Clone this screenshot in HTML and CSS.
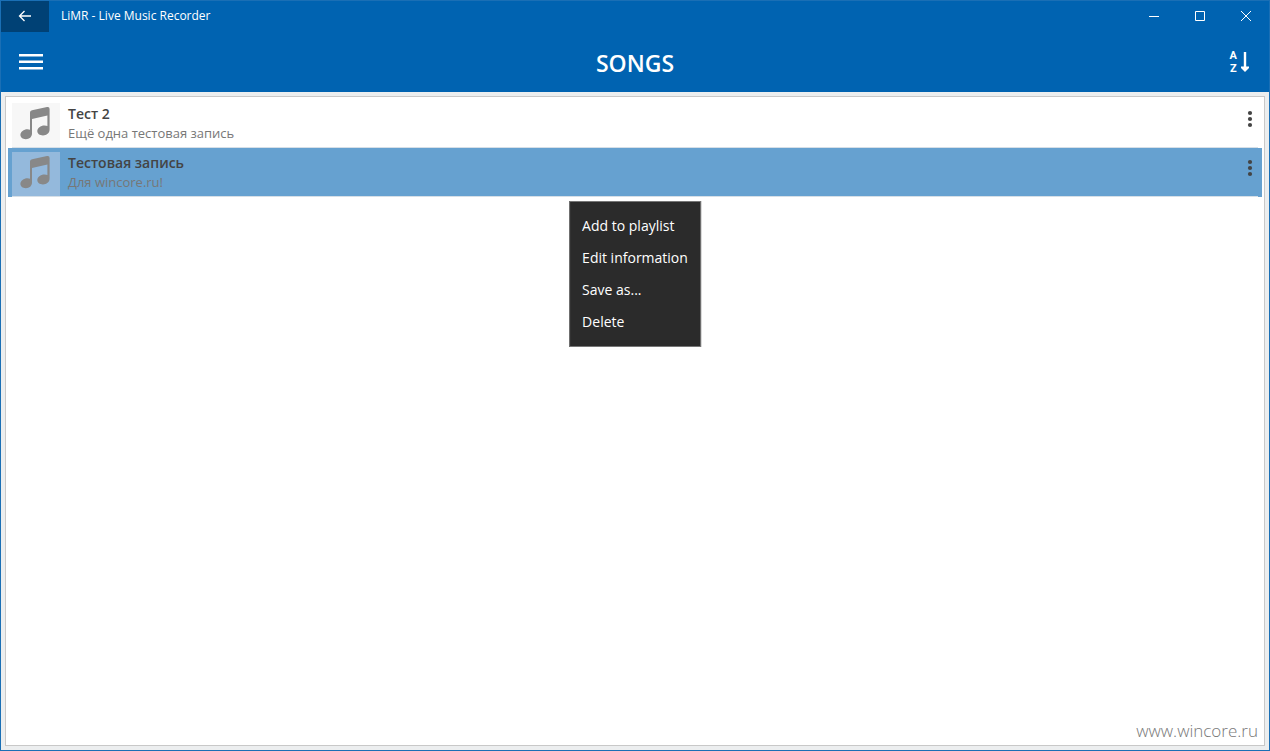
FILE: index.html
```html
<!DOCTYPE html>
<html lang="en">
<head>
    <meta charset="UTF-8">
    <meta name="viewport" content="width=device-width, initial-scale=1.0">
    <title>LiMR - Live Music Recorder</title>
    <link rel="stylesheet" href="styles.css">
</head>
<body>
    <!-- Shared icons -->
    <svg class="defs" width="0" height="0" aria-hidden="true">
        <symbol id="note" viewBox="0 0 48 44">
            <path d="M18 9.600 Q18 7.600 20 7.200 L35 4 Q37.600 3.400 37.600 6 V26.500 C37.600 30 34.500 32.400 31 32.400 C27.600 32.400 25.300 30.500 25.300 28 C25.300 25 28.600 22.400 32.400 22.400 C33.800 22.400 34.800 22.700 35.400 23 V12.600 L20 16 V30.500 C20 34 17.400 36.200 13.800 36.200 C10.600 36.200 8.400 34.300 8.400 31.800 C8.400 28.800 11.800 26.200 15.400 26.200 C16.600 26.200 17.400 26.400 18 26.700 Z"/>
        </symbol>
        <symbol id="dots" viewBox="0 0 6 18">
            <circle cx="3" cy="3" r="2.1"/>
            <circle cx="3" cy="9" r="2.1"/>
            <circle cx="3" cy="15" r="2.1"/>
        </symbol>
    </svg>

    <div class="window">
        <!-- Header -->
        <header>
            <div class="titlebar">
                <button class="back" aria-label="Back">
                    <svg width="14" height="12" viewBox="0 0 14 12"><path d="M13 6H1.500M6.500 1L1.500 6L6.500 11"/></svg>
                </button>
                <span class="caption">LiMR - Live Music Recorder</span>
                <button class="control" aria-label="Minimize">
                    <svg width="12" height="12" viewBox="0 0 12 12"><path d="M1 6.500H11"/></svg>
                </button>
                <button class="control" aria-label="Maximize">
                    <svg width="12" height="12" viewBox="0 0 12 12"><path d="M1.500 1.500H10.500V10.500H1.500Z"/></svg>
                </button>
                <button class="control" aria-label="Close">
                    <svg width="12" height="12" viewBox="0 0 12 12"><path d="M1 1L11 11M11 1L1 11"/></svg>
                </button>
            </div>
            <div class="toolbar">
                <button class="tool" aria-label="Menu">
                    <svg width="24" height="16" viewBox="0 0 24 16"><path d="M0 0H24V2.500H0ZM0 6.600H24V9.100H0ZM0 13H24V15.500H0Z"/></svg>
                </button>
                <h1>SONGS</h1>
                <button class="tool sort" aria-label="Sort">
                    <span class="letters"><span>A</span><span>Z</span></span>
                    <svg width="8" height="20" viewBox="0 0 8 20"><path d="M2.800 0H5.200V14.500H8V16L4 20L0 16V14.500H2.800Z"/></svg>
                </button>
            </div>
        </header>

        <!-- Song list -->
        <main>
            <div class="panel">
                <ul class="songs">
                    <li class="song">
                        <div class="row">
                            <svg class="thumb" width="48" height="44"><use href="#note"/></svg>
                            <div class="info">
                                <div class="name">Тест 2</div>
                                <div class="desc">Ещё одна тестовая запись</div>
                            </div>
                            <button class="more" aria-label="More"><svg width="6" height="18"><use href="#dots"/></svg></button>
                        </div>
                    </li>
                    <li class="song selected">
                        <div class="row">
                            <svg class="thumb" width="48" height="44"><use href="#note"/></svg>
                            <div class="info">
                                <div class="name">Тестовая запись</div>
                                <div class="desc">Для wincore.ru!</div>
                            </div>
                            <button class="more" aria-label="More"><svg width="6" height="18"><use href="#dots"/></svg></button>
                        </div>
                        <!-- Context menu -->
                        <div class="menu">
                            <button>Add to playlist</button>
                            <button>Edit information</button>
                            <button>Save as...</button>
                            <button>Delete</button>
                        </div>
                    </li>
                </ul>
                <div class="site">www.wincore.ru</div>
            </div>
        </main>
    </div>
</body>
</html>
```
FILE: styles.css
```css
* {
    box-sizing: border-box;
}
body {
    margin: 0;
    font-family: "Segoe UI", "Open Sans", "Noto Sans", sans-serif;
    color: #444;
}
button {
    margin: 0;
    padding: 0;
    border: none;
    background: none;
    font: inherit;
    color: inherit;
}
.defs {
    position: absolute;
}
.window {
    display: flex;
    flex-direction: column;
    min-height: 100vh;
    border: 1px solid #1a6fb5;
    background-color: #eceeef;
}

/* Header */
header {
    background-color: #0063b1;
    color: #fff;
}
.titlebar {
    display: flex;
    height: 31px;
}
.titlebar svg {
    fill: none;
    stroke: #fff;
    stroke-width: 1;
}
.back,
.control {
    display: flex;
    align-items: center;
    justify-content: center;
    padding-bottom: 1px;
}
.back {
    width: 48px;
    background-color: #004175;
}
.back svg {
    stroke-width: 1.3;
}
.control {
    width: 46px;
}
.caption {
    flex-grow: 1;
    padding-left: 12px;
    font-size: 12px;
    line-height: 30px;
}
.toolbar {
    display: flex;
    align-items: center;
    justify-content: space-between;
    height: 60px;
    padding: 0 18px;
}
.toolbar h1 {
    margin: 0;
    padding-top: 2px;
    font-size: 23px;
    font-weight: 600;
    line-height: 32px;
}
.tool {
    display: flex;
    align-items: center;
    gap: 4px;
    width: 24px;
}
.tool svg {
    flex-shrink: 0;
    fill: #fff;
}
.sort {
    justify-content: flex-end;
    padding-right: 2px;
}
.letters {
    display: flex;
    flex-direction: column;
    font-family: Roboto, sans-serif;
    font-size: 11px;
    font-weight: 700;
    line-height: 13px;
}

/* Song list */
main {
    display: flex;
    flex-grow: 1;
    padding: 4px;
}
.panel {
    display: flex;
    flex-direction: column;
    flex-grow: 1;
    justify-content: space-between;
    padding: 2px;
    border: 1px solid #c8c8c8;
    background-color: #fff;
}
.songs {
    margin: 0;
    padding: 0;
    list-style: none;
}
.song {
    position: relative;
    padding: 4px 4px 0;
}
.selected {
    background-color: #66a1d0;
}
.row {
    display: flex;
    align-items: flex-start;
    border-bottom: 1px solid #d6dfe7;
}
.thumb {
    background-color: #f7f7f7;
    fill: #888;
}
.selected .thumb {
    background-color: #94b9dc;
}
.info {
    flex-grow: 1;
    padding-left: 8px;
}
.name {
    font-size: 14px;
    font-weight: 600;
    line-height: 21px;
}
.desc {
    font-size: 13px;
    line-height: 19px;
    color: #777;
}
.more {
    display: flex;
    justify-content: center;
    width: 16px;
    padding-top: 7px;
}
.more svg {
    fill: #444;
}

/* Context menu */
.menu {
    position: absolute;
    top: 53px;
    left: 50%;
    display: flex;
    flex-direction: column;
    padding: 8px 12px;
    border: 1px solid #767676;
    background-color: #2b2b2b;
    color: #fff;
    font-size: 14px;
    line-height: 32px;
    white-space: nowrap;
    transform: translateX(-50%);
}
.menu button {
    text-align: left;
}
.site {
    padding: 0 4px;
    font-size: 17px;
    font-weight: 300;
    line-height: 24px;
    text-align: right;
    color: #777;
}
```
